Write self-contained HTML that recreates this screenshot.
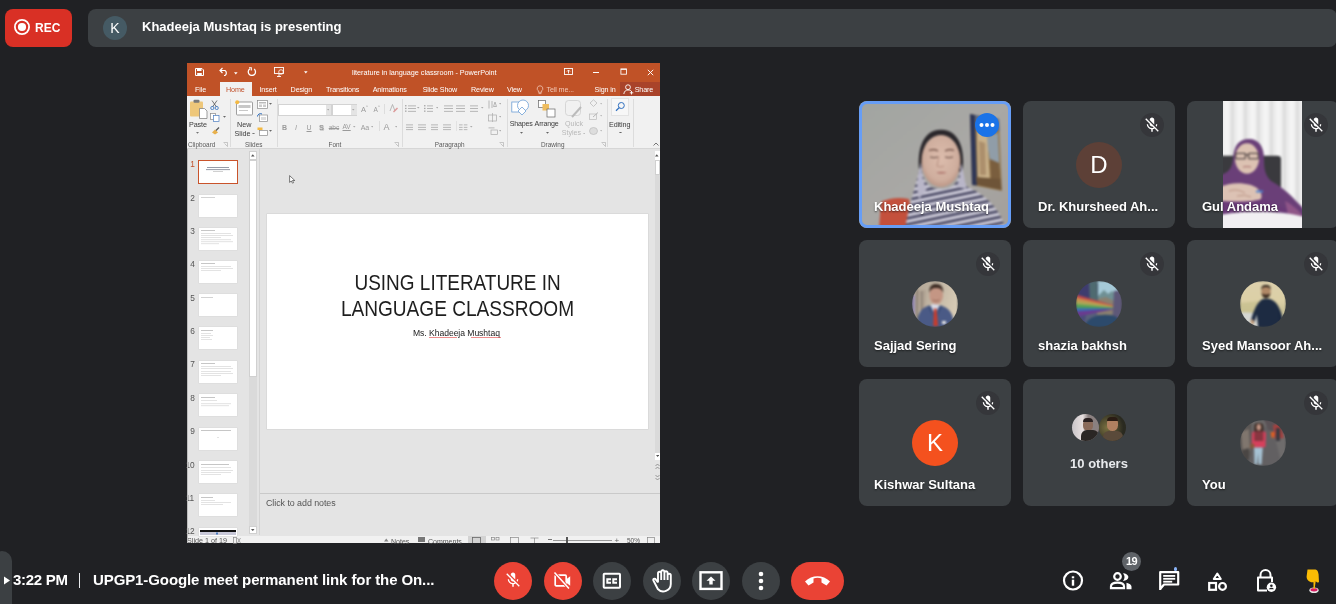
<!DOCTYPE html>
<html><head><meta charset="utf-8">
<style>
*{margin:0;padding:0;box-sizing:border-box}
html,body{width:1336px;height:604px;overflow:hidden;background:#202124;font-family:"Liberation Sans",sans-serif;position:relative}
#root{position:absolute;left:0;top:0;width:1336px;height:604px;will-change:transform}
.abs{position:absolute}
#rec{left:5px;top:9px;width:67px;height:38px;background:#d93025;border-radius:8px}
#bar{left:88px;top:9px;width:1249px;height:38px;background:#3c4043;border-radius:8px}
#ppt{left:187px;top:63px;width:473px;height:480px;background:#e6e6e6;overflow:hidden}
.tile{position:absolute;width:152px;height:127px;background:#3c4043;border-radius:8px;overflow:hidden}
.name{position:absolute;left:15px;top:98px;color:#fff;font-size:13px;font-weight:bold;white-space:nowrap;text-shadow:0 1px 2px rgba(0,0,0,.6)}
.mute{position:absolute;right:11px;top:12px;width:24px;height:24px;border-radius:50%;background:#35363a}
.av{position:absolute;left:53px;top:40.5px;width:46px;height:46px;border-radius:50%;overflow:hidden}
.btn{position:absolute;top:562px;width:38px;height:38px;border-radius:50%;background:#3c4043}
.red{background:#ea4335}
.t{white-space:nowrap}
</style></head><body>
<div id="root">
<div id="rec" class="abs">
  <svg class="abs" style="left:9px;top:10px" width="16" height="16" viewBox="0 0 16 16"><circle cx="8" cy="8" r="7.1" fill="none" stroke="#fff" stroke-width="1.8"/><circle cx="8" cy="8" r="4.1" fill="#fff"/></svg>
  <div class="abs" style="left:30px;top:12px;color:#fff;font-size:12px;font-weight:bold;line-height:14px">REC</div>
</div>
<div id="bar" class="abs">
  <div class="abs" style="left:15px;top:7px;width:24px;height:24px;border-radius:50%;background:#455a64;color:#fff;font-size:14px;line-height:24px;text-align:center">K</div>
  <div class="abs" style="left:54px;top:10px;color:#fff;font-size:13px;font-weight:bold;line-height:15px;white-space:nowrap">Khadeeja Mushtaq is presenting</div>
</div>
<!--PPT-->
<div class="abs" style="left:187px;top:63px;width:473px;height:480px;background:#e4e4e4"></div>
<div class="abs" style="left:187px;top:63px;width:473px;height:33px;background:#c05227"></div>
<div class="abs" style="left:620px;top:82px;width:40px;height:14px;background:#a9432a"></div>
<div class="abs" style="left:220px;top:82px;width:32px;height:14px;background:#f1f1f1"></div>
<div class="abs" style="left:187px;top:96px;width:473px;height:53px;background:#f1f1f1"></div>
<div class="abs" style="left:187px;top:148px;width:473px;height:1px;background:#d6d6d6"></div>
<svg class="abs" style="left:195px;top:68px" width="9" height="8" viewBox="0 0 9 8"><path d="M0.5 0.5H7L8.5 2V7.5H0.5Z" fill="none" stroke="#fff" stroke-width="1"/><rect x="2" y="0.5" width="4.5" height="2.5" fill="#fff"/><rect x="2.2" y="5" width="4.6" height="2.5" fill="#fff"/></svg>
<svg class="abs" style="left:219px;top:67px" width="10" height="9" viewBox="0 0 10 9"><path d="M1.5 3.5H6a3 3 0 0 1 0 5H5" fill="none" stroke="#fff" stroke-width="1.2"/><path d="M3.5 1L1 3.5L3.5 6" fill="none" stroke="#fff" stroke-width="1.2"/></svg>
<svg class="abs" style="left:233.5px;top:72px" width="4" height="3" viewBox="0 0 4 3"><path d="M0 0.3H3.6L1.8 2.5Z" fill="#fff"/></svg>
<svg class="abs" style="left:247px;top:67px" width="10" height="9" viewBox="0 0 10 9"><path d="M3 1.8a3.6 3.6 0 1 0 4.2 0.3" fill="none" stroke="#fff" stroke-width="1.3"/><path d="M2 0.8H4.3V3.5" fill="none" stroke="#fff" stroke-width="1.1"/></svg>
<svg class="abs" style="left:274px;top:67px" width="11" height="10" viewBox="0 0 11 10"><rect x="0.5" y="0.5" width="9" height="6" fill="none" stroke="#fff" stroke-width="0.9"/><path d="M5 7V9.5M3 9.5H7" stroke="#fff" stroke-width="0.9"/><circle cx="7" cy="5" r="2.3" fill="none" stroke="#fff" stroke-width="0.8"/></svg>
<svg class="abs" style="left:303.5px;top:71px" width="4" height="3" viewBox="0 0 4 3"><path d="M0 0.3H3.6L1.8 2.5Z" fill="#fff"/></svg>
<div class="abs t" style="left:352px;top:69.02px;font-size:7.3px;line-height:7.3px;color:#fff;font-weight:400;letter-spacing:-0.06px">literature in language classroom - PowerPoint</div>
<svg class="abs" style="left:564px;top:68px" width="9" height="7" viewBox="0 0 9 7"><rect x="0.5" y="0.5" width="8" height="6" fill="none" stroke="#fff" stroke-width="0.9"/><path d="M4.5 5.5V2M3 3.5L4.5 2L6 3.5" fill="none" stroke="#fff" stroke-width="0.9"/></svg>
<div class="abs" style="left:593px;top:72px;width:6px;height:0.9px;background:#fff"></div>
<svg class="abs" style="left:619.5px;top:68.3px" width="8" height="8" viewBox="0 0 8 8"><rect x="0.9" y="0.9" width="5.6" height="5.3" fill="none" stroke="#fff" stroke-width="0.85"/><rect x="0.9" y="0.9" width="5.6" height="0.9" fill="#fff"/></svg>
<svg class="abs" style="left:647px;top:69px" width="7" height="7" viewBox="0 0 7 7"><path d="M0.8 0.8L6.2 6.2M6.2 0.8L0.8 6.2" stroke="#fff" stroke-width="0.95"/></svg>
<div class="abs t" style="left:195px;top:85.51px;font-size:7.2px;line-height:7.2px;color:#fff;font-weight:400;letter-spacing:-0.15px">File</div>
<div class="abs t" style="left:226px;top:85.51px;font-size:7.2px;line-height:7.2px;color:#c1502b;font-weight:400;letter-spacing:-0.15px">Home</div>
<div class="abs t" style="left:259.5px;top:85.51px;font-size:7.2px;line-height:7.2px;color:#fff;font-weight:400;letter-spacing:-0.15px">Insert</div>
<div class="abs t" style="left:290.6px;top:85.51px;font-size:7.2px;line-height:7.2px;color:#fff;font-weight:400;letter-spacing:-0.15px">Design</div>
<div class="abs t" style="left:326px;top:85.51px;font-size:7.2px;line-height:7.2px;color:#fff;font-weight:400;letter-spacing:-0.15px">Transitions</div>
<div class="abs t" style="left:372.7px;top:85.51px;font-size:7.2px;line-height:7.2px;color:#fff;font-weight:400;letter-spacing:-0.15px">Animations</div>
<div class="abs t" style="left:422.7px;top:85.51px;font-size:7.2px;line-height:7.2px;color:#fff;font-weight:400;letter-spacing:-0.15px">Slide Show</div>
<div class="abs t" style="left:471px;top:85.51px;font-size:7.2px;line-height:7.2px;color:#fff;font-weight:400;letter-spacing:-0.15px">Review</div>
<div class="abs t" style="left:507px;top:85.51px;font-size:7.2px;line-height:7.2px;color:#fff;font-weight:400;letter-spacing:-0.15px">View</div>
<div class="abs t" style="left:546.6px;top:85.51px;font-size:7.2px;line-height:7.2px;color:#f2c9b8;font-weight:400;letter-spacing:-0.15px">Tell me...</div>
<div class="abs t" style="left:594.6px;top:85.51px;font-size:7.2px;line-height:7.2px;color:#fff;font-weight:400;letter-spacing:-0.15px">Sign in</div>
<div class="abs t" style="left:634.7px;top:85.51px;font-size:7.2px;line-height:7.2px;color:#fff;font-weight:400;letter-spacing:-0.15px">Share</div>
<svg class="abs" style="left:536px;top:85px" width="8" height="10" viewBox="0 0 8 10"><path d="M4 0.8a2.8 2.8 0 0 1 1.6 5.1V7.3H2.4V5.9A2.8 2.8 0 0 1 4 0.8ZM2.6 8.6H5.4" fill="none" stroke="#f2c9b8" stroke-width="0.8"/></svg>
<svg class="abs" style="left:623px;top:84px" width="11" height="11" viewBox="0 0 11 11"><circle cx="5" cy="3.2" r="2.4" fill="none" stroke="#fff" stroke-width="0.9"/><path d="M0.8 10C1.3 7 3 6 5 6S8 6.5 8.5 7.5M8.5 7V10.5M6.8 8.8H10.3" fill="none" stroke="#fff" stroke-width="0.9"/></svg>
<div class="abs t" style="left:188px;top:141.58px;font-size:6.4px;line-height:6.4px;color:#5a5a5a;font-weight:400;">Clipboard</div>
<div class="abs t" style="left:245px;top:141.58px;font-size:6.4px;line-height:6.4px;color:#5a5a5a;font-weight:400;">Slides</div>
<div class="abs t" style="left:328.5px;top:141.58px;font-size:6.4px;line-height:6.4px;color:#5a5a5a;font-weight:400;">Font</div>
<div class="abs t" style="left:434.8px;top:141.58px;font-size:6.4px;line-height:6.4px;color:#5a5a5a;font-weight:400;">Paragraph</div>
<div class="abs t" style="left:541px;top:141.58px;font-size:6.4px;line-height:6.4px;color:#5a5a5a;font-weight:400;">Drawing</div>
<svg class="abs" style="left:223px;top:142px" width="5" height="5" viewBox="0 0 5 5"><path d="M0.5 0.5H4.5V4.5M1.5 1.5L4.5 4.5" fill="none" stroke="#aaa" stroke-width="0.6"/></svg>
<svg class="abs" style="left:394.4px;top:142px" width="5" height="5" viewBox="0 0 5 5"><path d="M0.5 0.5H4.5V4.5M1.5 1.5L4.5 4.5" fill="none" stroke="#aaa" stroke-width="0.6"/></svg>
<svg class="abs" style="left:498.5px;top:142px" width="5" height="5" viewBox="0 0 5 5"><path d="M0.5 0.5H4.5V4.5M1.5 1.5L4.5 4.5" fill="none" stroke="#aaa" stroke-width="0.6"/></svg>
<svg class="abs" style="left:600.8px;top:142px" width="5" height="5" viewBox="0 0 5 5"><path d="M0.5 0.5H4.5V4.5M1.5 1.5L4.5 4.5" fill="none" stroke="#aaa" stroke-width="0.6"/></svg>
<div class="abs" style="left:230px;top:99px;width:1px;height:48px;background:#dcdcdc"></div>
<div class="abs" style="left:276.6px;top:99px;width:1px;height:48px;background:#dcdcdc"></div>
<div class="abs" style="left:401.5px;top:99px;width:1px;height:48px;background:#dcdcdc"></div>
<div class="abs" style="left:506.7px;top:99px;width:1px;height:48px;background:#dcdcdc"></div>
<div class="abs" style="left:607.3px;top:99px;width:1px;height:48px;background:#dcdcdc"></div>
<div class="abs" style="left:633.4px;top:99px;width:1px;height:48px;background:#dcdcdc"></div>
<svg class="abs" style="left:189px;top:99px" width="19" height="20" viewBox="0 0 19 20"><rect x="1" y="2.5" width="13" height="15" rx="1" fill="#eec77a"/><rect x="4.5" y="0.8" width="6" height="3" rx="1" fill="#7a7a7a"/><path d="M10.5 9.5H15.5L18 12V19.5H10.5Z" fill="#fff" stroke="#777" stroke-width="0.7"/></svg>
<div class="abs t" style="left:189px;top:121.41px;font-size:7.2px;line-height:7.2px;color:#3b3b3b;font-weight:400;letter-spacing:-0.1px">Paste</div>
<svg class="abs" style="left:195.5px;top:132.0px" width="3" height="1.7999999999999998" viewBox="0 0 3 1.7999999999999998"><path d="M0 0H3L1.5 1.7999999999999998Z" fill="#777"/></svg>
<svg class="abs" style="left:210px;top:100px" width="9" height="10" viewBox="0 0 9 10"><path d="M2 0.5L6.5 7M7 0.5L2.5 7" stroke="#555" stroke-width="0.8"/><circle cx="2.3" cy="8" r="1.6" fill="none" stroke="#2f6fbf" stroke-width="0.8"/><circle cx="6.7" cy="8" r="1.6" fill="none" stroke="#2f6fbf" stroke-width="0.8"/></svg>
<svg class="abs" style="left:210px;top:113px" width="10" height="9" viewBox="0 0 10 9"><rect x="0.5" y="0.5" width="5" height="6" fill="#fff" stroke="#888" stroke-width="0.7"/><rect x="3.5" y="2.5" width="5.5" height="6" fill="#fff" stroke="#4a7cc0" stroke-width="0.7"/></svg>
<svg class="abs" style="left:222.5px;top:116.0px" width="3" height="1.7999999999999998" viewBox="0 0 3 1.7999999999999998"><path d="M0 0H3L1.5 1.7999999999999998Z" fill="#666"/></svg>
<svg class="abs" style="left:211px;top:127px" width="9" height="8" viewBox="0 0 9 8"><path d="M1 5.5L4 2.5L7 5.5L4 7.5Z" fill="#e8b04a"/><path d="M5 3.5L8 0.5" stroke="#555" stroke-width="1.2"/></svg>
<svg class="abs" style="left:234px;top:99px" width="20" height="17" viewBox="0 0 20 17"><rect x="2.5" y="3" width="16" height="13" rx="0.8" fill="#fff" stroke="#888" stroke-width="0.8"/><rect x="4.5" y="6" width="12" height="3" fill="#c8c8c8"/><rect x="5" y="11" width="9" height="0.8" fill="#bbb"/><circle cx="3.2" cy="3.2" r="2" fill="#f4b942"/></svg>
<div class="abs t" style="left:237px;top:121.41px;font-size:7.2px;line-height:7.2px;color:#3b3b3b;font-weight:400;">New</div>
<div class="abs t" style="left:234.5px;top:130.11px;font-size:7.2px;line-height:7.2px;color:#3b3b3b;font-weight:400;">Slide</div>
<svg class="abs" style="left:251.5px;top:132.5px" width="3" height="1.7999999999999998" viewBox="0 0 3 1.7999999999999998"><path d="M0 0H3L1.5 1.7999999999999998Z" fill="#777"/></svg>
<svg class="abs" style="left:257px;top:100px" width="11" height="9" viewBox="0 0 11 9"><rect x="0.5" y="0.5" width="10" height="8" fill="#fff" stroke="#8a8a8a" stroke-width="0.7"/><rect x="2" y="2" width="7" height="1.5" fill="#bbb"/><rect x="2" y="4.5" width="3" height="2.5" fill="#ccc"/><rect x="6" y="4.5" width="3" height="2.5" fill="#ccc"/></svg>
<svg class="abs" style="left:268.5px;top:103.0px" width="3" height="1.7999999999999998" viewBox="0 0 3 1.7999999999999998"><path d="M0 0H3L1.5 1.7999999999999998Z" fill="#666"/></svg>
<svg class="abs" style="left:257px;top:113px" width="11" height="9" viewBox="0 0 11 9"><rect x="2.5" y="2" width="8" height="6.5" fill="#fff" stroke="#8a8a8a" stroke-width="0.7"/><path d="M0.5 3.5A3 3 0 0 1 5 1" fill="none" stroke="#2f6fbf" stroke-width="1"/><rect x="4" y="4" width="5" height="3" fill="#ddd"/></svg>
<svg class="abs" style="left:257px;top:127px" width="11" height="9" viewBox="0 0 11 9"><rect x="0.5" y="0.5" width="5" height="2.5" fill="#f4b942"/><rect x="2.5" y="3.5" width="8" height="5" fill="#fff" stroke="#8a8a8a" stroke-width="0.7"/></svg>
<svg class="abs" style="left:268.5px;top:130.0px" width="3" height="1.7999999999999998" viewBox="0 0 3 1.7999999999999998"><path d="M0 0H3L1.5 1.7999999999999998Z" fill="#666"/></svg>
<div class="abs" style="left:278.4px;top:103.6px;width:53.3px;height:12px;background:#fff;border:1px solid #d3d3d3"></div>
<div class="abs" style="left:325.5px;top:104.6px;width:5.5px;height:10px;background:#e4e4e4"></div>
<svg class="abs" style="left:326.95px;top:109.16666666666667px" width="2.5" height="1.5" viewBox="0 0 2.5 1.5"><path d="M0 0H2.5L1.25 1.5Z" fill="#aaa"/></svg>
<div class="abs" style="left:331.7px;top:103.6px;width:25.6px;height:12px;background:#fff;border:1px solid #d3d3d3"></div>
<div class="abs" style="left:351px;top:104.6px;width:5.5px;height:10px;background:#e4e4e4"></div>
<svg class="abs" style="left:352.45px;top:109.16666666666667px" width="2.5" height="1.5" viewBox="0 0 2.5 1.5"><path d="M0 0H2.5L1.25 1.5Z" fill="#aaa"/></svg>
<div class="abs t" style="left:361px;top:106.15px;font-size:7.5px;line-height:7.5px;color:#9a9a9a;font-weight:400;">A</div>
<div class="abs t" style="left:366px;top:104.61px;font-size:4px;line-height:4px;color:#9a9a9a;font-weight:400;">^</div>
<div class="abs t" style="left:373.5px;top:107.00px;font-size:6.5px;line-height:6.5px;color:#9a9a9a;font-weight:400;">A</div>
<div class="abs t" style="left:378px;top:104.61px;font-size:4px;line-height:4px;color:#9a9a9a;font-weight:400;">^</div>
<div class="abs" style="left:384.3px;top:104px;width:1px;height:10px;background:#ddd"></div>
<svg class="abs" style="left:389px;top:104px" width="9" height="9" viewBox="0 0 9 9"><path d="M1 7L3.5 0.5L6 7" fill="none" stroke="#aaa" stroke-width="0.8"/><path d="M4.5 8L8.5 4" stroke="#d99" stroke-width="1.5"/></svg>
<div class="abs t" style="left:282px;top:124.07px;font-size:7px;line-height:7px;color:#9a9a9a;font-weight:700;">B</div>
<div class="abs t" style="left:295px;top:124.07px;font-size:7px;line-height:7px;color:#9a9a9a;font-weight:400;"><i>I</i></div>
<div class="abs t" style="left:306.5px;top:124.07px;font-size:7px;line-height:7px;color:#9a9a9a;font-weight:400;"><u>U</u></div>
<div class="abs t" style="left:319px;top:123.65px;font-size:7.5px;line-height:7.5px;color:#9a9a9a;font-weight:700;text-shadow:0.5px 0.5px 0 #ccc">S</div>
<div class="abs t" style="left:328.7px;top:124.50px;font-size:6.5px;line-height:6.5px;color:#9a9a9a;font-weight:400;"><s>abc</s></div>
<div class="abs t" style="left:342.5px;top:123.50px;font-size:6.5px;line-height:6.5px;color:#9a9a9a;font-weight:400;"><u>AV</u></div>
<svg class="abs" style="left:353.35px;top:126.16666666666667px" width="2.5" height="1.5" viewBox="0 0 2.5 1.5"><path d="M0 0H2.5L1.25 1.5Z" fill="#aaa"/></svg>
<div class="abs t" style="left:360.7px;top:124.07px;font-size:7px;line-height:7px;color:#9a9a9a;font-weight:400;">Aa</div>
<svg class="abs" style="left:370.75px;top:126.16666666666667px" width="2.5" height="1.5" viewBox="0 0 2.5 1.5"><path d="M0 0H2.5L1.25 1.5Z" fill="#aaa"/></svg>
<div class="abs" style="left:379px;top:121px;width:1px;height:10px;background:#ddd"></div>
<div class="abs t" style="left:383.6px;top:122.68px;font-size:9px;line-height:9px;color:#9a9a9a;font-weight:400;">A</div>
<svg class="abs" style="left:394.55px;top:126.16666666666667px" width="2.5" height="1.5" viewBox="0 0 2.5 1.5"><path d="M0 0H2.5L1.25 1.5Z" fill="#aaa"/></svg>
<svg class="abs" style="left:405px;top:105px" width="11" height="9.100000000000001" viewBox="0 0 11 9.100000000000001"><rect x="0" y="0.09999999999999998" width="1.5" height="1.3" fill="#a8a8a8"/><rect x="3" y="0.5" width="8" height="0.8" fill="#a8a8a8"/><rect x="0" y="2.8000000000000003" width="1.5" height="1.3" fill="#a8a8a8"/><rect x="3" y="3.2" width="8" height="0.8" fill="#a8a8a8"/><rect x="0" y="5.5" width="1.5" height="1.3" fill="#a8a8a8"/><rect x="3" y="5.9" width="8" height="0.8" fill="#a8a8a8"/></svg>
<svg class="abs" style="left:417.15px;top:107.16666666666667px" width="2.5" height="1.5" viewBox="0 0 2.5 1.5"><path d="M0 0H2.5L1.25 1.5Z" fill="#aaa"/></svg>
<svg class="abs" style="left:424px;top:105px" width="9" height="9.100000000000001" viewBox="0 0 9 9.100000000000001"><rect x="0" y="0.09999999999999998" width="1.5" height="1.3" fill="#a8a8a8"/><rect x="3" y="0.5" width="6" height="0.8" fill="#a8a8a8"/><rect x="0" y="2.8000000000000003" width="1.5" height="1.3" fill="#a8a8a8"/><rect x="3" y="3.2" width="6" height="0.8" fill="#a8a8a8"/><rect x="0" y="5.5" width="1.5" height="1.3" fill="#a8a8a8"/><rect x="3" y="5.9" width="6" height="0.8" fill="#a8a8a8"/></svg>
<svg class="abs" style="left:435.75px;top:107.16666666666667px" width="2.5" height="1.5" viewBox="0 0 2.5 1.5"><path d="M0 0H2.5L1.25 1.5Z" fill="#aaa"/></svg>
<svg class="abs" style="left:443.6px;top:105px" width="9" height="9.100000000000001" viewBox="0 0 9 9.100000000000001"><rect x="0" y="0.5" width="9" height="0.8" fill="#a8a8a8"/><rect x="0" y="3.2" width="9" height="0.8" fill="#a8a8a8"/><rect x="0" y="5.9" width="9" height="0.8" fill="#a8a8a8"/></svg>
<svg class="abs" style="left:456.4px;top:105px" width="9" height="9.100000000000001" viewBox="0 0 9 9.100000000000001"><rect x="0" y="0.5" width="9" height="0.8" fill="#a8a8a8"/><rect x="0" y="3.2" width="9" height="0.8" fill="#a8a8a8"/><rect x="0" y="5.9" width="9" height="0.8" fill="#a8a8a8"/></svg>
<svg class="abs" style="left:470px;top:105px" width="8" height="9.100000000000001" viewBox="0 0 8 9.100000000000001"><rect x="0" y="0.5" width="8" height="0.8" fill="#a8a8a8"/><rect x="0" y="3.2" width="8" height="0.8" fill="#a8a8a8"/><rect x="0" y="5.9" width="8" height="0.8" fill="#a8a8a8"/></svg>
<svg class="abs" style="left:481.15px;top:107.16666666666667px" width="2.5" height="1.5" viewBox="0 0 2.5 1.5"><path d="M0 0H2.5L1.25 1.5Z" fill="#aaa"/></svg>
<svg class="abs" style="left:488px;top:100px" width="9" height="9" viewBox="0 0 9 9"><path d="M1 0.5V8.5M4 1V8M7 2L5.5 6.5H8.5Z" fill="none" stroke="#aaa" stroke-width="0.8"/></svg>
<svg class="abs" style="left:498.75px;top:103.16666666666667px" width="2.5" height="1.5" viewBox="0 0 2.5 1.5"><path d="M0 0H2.5L1.25 1.5Z" fill="#aaa"/></svg>
<svg class="abs" style="left:488px;top:113px" width="9" height="9" viewBox="0 0 9 9"><rect x="0.5" y="2" width="8" height="6" fill="none" stroke="#aaa" stroke-width="0.7"/><path d="M4.5 0V9" stroke="#aaa" stroke-width="0.7"/></svg>
<svg class="abs" style="left:498.75px;top:116.16666666666667px" width="2.5" height="1.5" viewBox="0 0 2.5 1.5"><path d="M0 0H2.5L1.25 1.5Z" fill="#aaa"/></svg>
<svg class="abs" style="left:488px;top:127px" width="10" height="8" viewBox="0 0 10 8"><rect x="3" y="3" width="6.5" height="4.5" fill="none" stroke="#aaa" stroke-width="0.7"/><rect x="0.5" y="0.5" width="6" height="0.8" fill="#aaa"/></svg>
<svg class="abs" style="left:498.75px;top:130.16666666666666px" width="2.5" height="1.5" viewBox="0 0 2.5 1.5"><path d="M0 0H2.5L1.25 1.5Z" fill="#aaa"/></svg>
<svg class="abs" style="left:405.8px;top:123.6px" width="7.5" height="8.2" viewBox="0 0 7.5 8.2"><rect x="0" y="0.5" width="7.5" height="0.8" fill="#a8a8a8"/><rect x="0" y="2.9" width="7.5" height="0.8" fill="#a8a8a8"/><rect x="0" y="5.3" width="7.5" height="0.8" fill="#a8a8a8"/></svg>
<svg class="abs" style="left:418px;top:123.6px" width="8" height="8.2" viewBox="0 0 8 8.2"><rect x="0" y="0.5" width="8" height="0.8" fill="#a8a8a8"/><rect x="0" y="2.9" width="8" height="0.8" fill="#a8a8a8"/><rect x="0" y="5.3" width="8" height="0.8" fill="#a8a8a8"/></svg>
<svg class="abs" style="left:430.8px;top:123.6px" width="7.5" height="8.2" viewBox="0 0 7.5 8.2"><rect x="0" y="0.5" width="7.5" height="0.8" fill="#a8a8a8"/><rect x="0" y="2.9" width="7.5" height="0.8" fill="#a8a8a8"/><rect x="0" y="5.3" width="7.5" height="0.8" fill="#a8a8a8"/></svg>
<svg class="abs" style="left:443px;top:123.6px" width="8" height="8.2" viewBox="0 0 8 8.2"><rect x="0" y="0.5" width="8" height="0.8" fill="#a8a8a8"/><rect x="0" y="2.9" width="8" height="0.8" fill="#a8a8a8"/><rect x="0" y="5.3" width="8" height="0.8" fill="#a8a8a8"/></svg>
<div class="abs" style="left:456px;top:121px;width:1px;height:10px;background:#e2e2e2"></div>
<svg class="abs" style="left:459px;top:123.6px" width="8.5" height="7" viewBox="0 0 8.5 7"><rect x="0" y="0.5" width="3.6" height="0.8" fill="#aaa"/><rect x="4.8" y="0.5" width="3.6" height="0.8" fill="#aaa"/><rect x="0" y="2.9" width="3.6" height="0.8" fill="#aaa"/><rect x="4.8" y="2.9" width="3.6" height="0.8" fill="#aaa"/><rect x="0" y="5.3" width="3.6" height="0.8" fill="#aaa"/><rect x="4.8" y="5.3" width="3.6" height="0.8" fill="#aaa"/></svg>
<svg class="abs" style="left:470.35px;top:126.16666666666667px" width="2.5" height="1.5" viewBox="0 0 2.5 1.5"><path d="M0 0H2.5L1.25 1.5Z" fill="#aaa"/></svg>
<svg class="abs" style="left:511px;top:99px" width="19" height="19" viewBox="0 0 19 19"><rect x="0.8" y="3" width="10" height="10" fill="#fff" stroke="#6d9fd6" stroke-width="0.8"/><circle cx="12" cy="6.5" r="5.5" fill="#fff" stroke="#6d9fd6" stroke-width="0.8"/><path d="M7 12L11 8L15 12L11 16Z" fill="#fff" stroke="#6d9fd6" stroke-width="0.8"/></svg>
<div class="abs t" style="left:509.7px;top:121.49px;font-size:7.1px;line-height:7.1px;color:#3b3b3b;font-weight:400;letter-spacing:-0.2px">Shapes</div>
<svg class="abs" style="left:519.5px;top:132.0px" width="3" height="1.7999999999999998" viewBox="0 0 3 1.7999999999999998"><path d="M0 0H3L1.5 1.7999999999999998Z" fill="#666"/></svg>
<svg class="abs" style="left:538px;top:100px" width="18" height="18" viewBox="0 0 18 18"><rect x="0.5" y="0.5" width="7" height="7" fill="#fff" stroke="#666" stroke-width="0.7"/><rect x="4.5" y="4" width="6.5" height="6.5" fill="#efbd5f"/><rect x="9" y="9" width="8" height="8" fill="#fff" stroke="#666" stroke-width="0.7"/></svg>
<div class="abs t" style="left:534.6px;top:121.49px;font-size:7.1px;line-height:7.1px;color:#3b3b3b;font-weight:400;letter-spacing:-0.2px">Arrange</div>
<svg class="abs" style="left:545.8px;top:132.0px" width="3" height="1.7999999999999998" viewBox="0 0 3 1.7999999999999998"><path d="M0 0H3L1.5 1.7999999999999998Z" fill="#666"/></svg>
<svg class="abs" style="left:565px;top:100px" width="19" height="19" viewBox="0 0 19 19"><rect x="0.5" y="0.5" width="15" height="15" rx="3" fill="none" stroke="#cfcfcf" stroke-width="0.8"/><path d="M7 17L16 7" stroke="#bbb" stroke-width="2"/></svg>
<div class="abs t" style="left:565px;top:121.49px;font-size:7.1px;line-height:7.1px;color:#b8b8b8;font-weight:400;">Quick</div>
<div class="abs t" style="left:561.8px;top:130.29px;font-size:7.1px;line-height:7.1px;color:#b8b8b8;font-weight:400;">Styles</div>
<svg class="abs" style="left:582.75px;top:132.66666666666666px" width="2.5" height="1.5" viewBox="0 0 2.5 1.5"><path d="M0 0H2.5L1.25 1.5Z" fill="#bbb"/></svg>
<svg class="abs" style="left:588.5px;top:99px" width="9" height="8" viewBox="0 0 9 8"><path d="M1 4L4.5 0.8L8 4L4.5 7.5Z" fill="none" stroke="#bbb" stroke-width="0.8"/></svg>
<svg class="abs" style="left:599.75px;top:103.16666666666667px" width="2.5" height="1.5" viewBox="0 0 2.5 1.5"><path d="M0 0H2.5L1.25 1.5Z" fill="#bbb"/></svg>
<svg class="abs" style="left:588.5px;top:112px" width="10" height="8" viewBox="0 0 10 8"><rect x="0.5" y="2" width="7" height="5.5" fill="none" stroke="#bbb" stroke-width="0.7"/><path d="M4 5L9 0.5" stroke="#aaa" stroke-width="0.8"/></svg>
<svg class="abs" style="left:599.75px;top:115.16666666666667px" width="2.5" height="1.5" viewBox="0 0 2.5 1.5"><path d="M0 0H2.5L1.25 1.5Z" fill="#bbb"/></svg>
<svg class="abs" style="left:588.5px;top:126px" width="10" height="9" viewBox="0 0 10 9"><ellipse cx="4.5" cy="5" rx="4" ry="3.5" fill="#ddd" stroke="#bbb" stroke-width="0.7"/></svg>
<svg class="abs" style="left:599.75px;top:130.16666666666666px" width="2.5" height="1.5" viewBox="0 0 2.5 1.5"><path d="M0 0H2.5L1.25 1.5Z" fill="#bbb"/></svg>
<div class="abs" style="left:611px;top:98px;width:18px;height:18.4px;background:#f7f7f7;border:1px solid #e3e3e3"></div>
<svg class="abs" style="left:613px;top:100px" width="14" height="14" viewBox="0 0 14 14"><circle cx="8.3" cy="5.5" r="3" fill="none" stroke="#2f6fbf" stroke-width="1"/><path d="M6.2 7.6L3 10.8" stroke="#2f6fbf" stroke-width="1.3"/></svg>
<div class="abs t" style="left:609px;top:120.61px;font-size:7.2px;line-height:7.2px;color:#3b3b3b;font-weight:400;letter-spacing:-0.1px">Editing</div>
<svg class="abs" style="left:618.8px;top:131.6px" width="3" height="1.7999999999999998" viewBox="0 0 3 1.7999999999999998"><path d="M0 0H3L1.5 1.7999999999999998Z" fill="#666"/></svg>
<svg class="abs" style="left:653px;top:142px" width="6" height="4" viewBox="0 0 6 4"><path d="M0.5 3.5L3 1L5.5 3.5" fill="none" stroke="#555" stroke-width="0.8"/></svg>
<div class="abs" style="left:248.8px;top:151px;width:8.5px;height:383px;background:#dadada"></div>
<div class="abs" style="left:248.8px;top:151px;width:8.5px;height:9px;background:#fff;border:1px solid #d0d0d0"></div>
<svg class="abs" style="left:251.2px;top:154px" width="4" height="3" viewBox="0 0 4 3"><path d="M0 2.5H3.6L1.8 0.3Z" fill="#555"/></svg>
<div class="abs" style="left:248.8px;top:160px;width:8.5px;height:216.5px;background:#fff;border:1px solid #d0d0d0"></div>
<div class="abs" style="left:248.8px;top:525.8px;width:8.5px;height:8px;background:#fff;border:1px solid #d0d0d0"></div>
<svg class="abs" style="left:251.25px;top:528.8333333333334px" width="3.5" height="2.1" viewBox="0 0 3.5 2.1"><path d="M0 0H3.5L1.75 2.1Z" fill="#555"/></svg>
<div class="abs" style="left:259.4px;top:149px;width:1px;height:386px;background:#d4d4d4"></div>
<div class="abs t" style="left:190.3px;top:159.57px;font-size:8.3px;line-height:8.3px;color:#c1502b;font-weight:400;">1</div>
<div class="abs" style="left:198px;top:160px;width:40px;height:24px;background:#fff;border:1.6px solid #c9532b"></div>
<svg class="abs" style="left:203px;top:166px" width="30" height="10" viewBox="0 0 30 10"><rect x="4" y="1" width="22" height="0.9" fill="#8a90a0"/><rect x="3" y="3.2" width="24" height="0.9" fill="#8a90a0"/><rect x="10" y="5.3" width="10" height="0.6" fill="#b0b0b0"/></svg>
<div class="abs t" style="left:190.3px;top:194.07px;font-size:8.3px;line-height:8.3px;color:#555;font-weight:400;">2</div>
<div class="abs" style="left:199px;top:194.5px;width:37.5px;height:22px;background:#fff;box-shadow:0 0 0 0.5px #d8d8d8"></div>
<div class="abs t" style="left:190.3px;top:227.27px;font-size:8.3px;line-height:8.3px;color:#555;font-weight:400;">3</div>
<div class="abs" style="left:199px;top:227.7px;width:37.5px;height:22px;background:#fff;box-shadow:0 0 0 0.5px #d8d8d8"></div>
<div class="abs t" style="left:190.3px;top:260.07px;font-size:8.3px;line-height:8.3px;color:#555;font-weight:400;">4</div>
<div class="abs" style="left:199px;top:260.5px;width:37.5px;height:22px;background:#fff;box-shadow:0 0 0 0.5px #d8d8d8"></div>
<div class="abs t" style="left:190.3px;top:293.57px;font-size:8.3px;line-height:8.3px;color:#555;font-weight:400;">5</div>
<div class="abs" style="left:199px;top:294px;width:37.5px;height:22px;background:#fff;box-shadow:0 0 0 0.5px #d8d8d8"></div>
<div class="abs t" style="left:190.3px;top:326.87px;font-size:8.3px;line-height:8.3px;color:#555;font-weight:400;">6</div>
<div class="abs" style="left:199px;top:327.3px;width:37.5px;height:22px;background:#fff;box-shadow:0 0 0 0.5px #d8d8d8"></div>
<div class="abs t" style="left:190.3px;top:360.07px;font-size:8.3px;line-height:8.3px;color:#555;font-weight:400;">7</div>
<div class="abs" style="left:199px;top:360.5px;width:37.5px;height:22px;background:#fff;box-shadow:0 0 0 0.5px #d8d8d8"></div>
<div class="abs t" style="left:190.3px;top:393.57px;font-size:8.3px;line-height:8.3px;color:#555;font-weight:400;">8</div>
<div class="abs" style="left:199px;top:394px;width:37.5px;height:22px;background:#fff;box-shadow:0 0 0 0.5px #d8d8d8"></div>
<div class="abs t" style="left:190.3px;top:427.07px;font-size:8.3px;line-height:8.3px;color:#555;font-weight:400;">9</div>
<div class="abs" style="left:199px;top:427.5px;width:37.5px;height:22px;background:#fff;box-shadow:0 0 0 0.5px #d8d8d8"></div>
<div class="abs t" style="left:185.5px;top:460.57px;font-size:8.3px;line-height:8.3px;color:#555;font-weight:400;">10</div>
<div class="abs" style="left:199px;top:461px;width:37.5px;height:22px;background:#fff;box-shadow:0 0 0 0.5px #d8d8d8"></div>
<div class="abs t" style="left:185.5px;top:493.57px;font-size:8.3px;line-height:8.3px;color:#555;font-weight:400;">11</div>
<div class="abs" style="left:199px;top:494px;width:37.5px;height:22px;background:#fff;box-shadow:0 0 0 0.5px #d8d8d8"></div>
<div class="abs t" style="left:185.5px;top:527.07px;font-size:8.3px;line-height:8.3px;color:#555;font-weight:400;">12</div>
<div class="abs" style="left:199px;top:527.5px;width:37.5px;height:8px;background:#fff;box-shadow:0 0 0 0.5px #d8d8d8"></div>
<svg class="abs" style="left:201px;top:197px" width="20" height="2" viewBox="0 0 20 2"><rect width="14" height="0.8" fill="#c8c8c8"/></svg>
<svg class="abs" style="left:201px;top:230px" width="34" height="16" viewBox="0 0 34 16"><rect width="14" height="0.8" fill="#b8b8b8"/><rect y="3" width="30" height="0.6" fill="#d0d0d0"/><rect y="5" width="32" height="0.6" fill="#d0d0d0"/><rect y="7" width="20" height="0.6" fill="#d0d0d0"/><rect y="9.5" width="30" height="0.6" fill="#d0d0d0"/><rect y="11.5" width="32" height="0.6" fill="#d0d0d0"/><rect y="13.5" width="18" height="0.6" fill="#d0d0d0"/></svg>
<svg class="abs" style="left:201px;top:263px" width="34" height="10" viewBox="0 0 34 10"><rect width="14" height="0.8" fill="#b8b8b8"/><rect y="3" width="30" height="0.6" fill="#d0d0d0"/><rect y="5" width="32" height="0.6" fill="#d0d0d0"/><rect y="7" width="20" height="0.6" fill="#d0d0d0"/></svg>
<svg class="abs" style="left:201px;top:297px" width="20" height="2" viewBox="0 0 20 2"><rect width="12" height="0.8" fill="#c8c8c8"/></svg>
<svg class="abs" style="left:201px;top:330px" width="34" height="14" viewBox="0 0 34 14"><rect width="12" height="0.8" fill="#b8b8b8"/><rect y="3" width="10" height="0.6" fill="#d0d0d0"/><rect y="5" width="12" height="0.6" fill="#d0d0d0"/><rect y="7" width="9" height="0.6" fill="#d0d0d0"/><rect y="9" width="11" height="0.6" fill="#d0d0d0"/></svg>
<svg class="abs" style="left:201px;top:363px" width="34" height="16" viewBox="0 0 34 16"><rect width="14" height="0.8" fill="#b8b8b8"/><rect y="3" width="30" height="0.6" fill="#d0d0d0"/><rect y="5" width="32" height="0.6" fill="#d0d0d0"/><rect y="8" width="30" height="0.6" fill="#d0d0d0"/><rect y="10" width="32" height="0.6" fill="#d0d0d0"/><rect y="12" width="20" height="0.6" fill="#d0d0d0"/></svg>
<svg class="abs" style="left:201px;top:397px" width="34" height="12" viewBox="0 0 34 12"><rect width="14" height="0.8" fill="#b8b8b8"/><rect y="3" width="16" height="0.6" fill="#d0d0d0"/><rect y="6.5" width="30" height="0.6" fill="#d0d0d0"/><rect y="8.5" width="28" height="0.6" fill="#d0d0d0"/></svg>
<svg class="abs" style="left:201px;top:430px" width="34" height="10" viewBox="0 0 34 10"><rect width="30" height="0.8" fill="#b8b8b8"/><rect x="16" y="7" width="2" height="0.6" fill="#d0d0d0"/></svg>
<svg class="abs" style="left:201px;top:464px" width="34" height="14" viewBox="0 0 34 14"><rect width="28" height="0.8" fill="#b8b8b8"/><rect y="3" width="30" height="0.6" fill="#d0d0d0"/><rect y="6" width="32" height="0.6" fill="#d0d0d0"/><rect y="8" width="30" height="0.6" fill="#d0d0d0"/><rect y="10" width="20" height="0.6" fill="#d0d0d0"/></svg>
<svg class="abs" style="left:201px;top:497px" width="34" height="12" viewBox="0 0 34 12"><rect width="12" height="0.8" fill="#b8b8b8"/><rect y="3" width="14" height="0.6" fill="#d0d0d0"/><rect y="5" width="30" height="0.6" fill="#d0d0d0"/><rect y="7" width="22" height="0.6" fill="#d0d0d0"/></svg>
<svg class="abs" style="left:200px;top:529.5px" width="36" height="5.5" viewBox="0 0 36 5.5"><rect width="36" height="2" fill="#111"/><rect y="2" width="36" height="3.5" fill="#c8c8d8"/><rect x="16" y="2.5" width="2" height="2" fill="#4a7cc0"/></svg>
<div class="abs" style="left:267px;top:214px;width:381px;height:214.5px;background:#fff;box-shadow:0 0 0 0.6px #d4d4d4"></div>
<div class="abs t" style="left:267px;top:269.5px;width:381px;text-align:center;font-size:22px;line-height:26px;color:#1e1e1e"><span style="display:inline-block;transform:scaleX(0.862)">USING LITERATURE IN</span></div>
<div class="abs t" style="left:267px;top:295.5px;width:381px;text-align:center;font-size:22px;line-height:26px;color:#1e1e1e"><span style="display:inline-block;transform:scaleX(0.867)">LANGUAGE CLASSROOM</span></div>
<div class="abs t" style="left:413px;top:328.52px;font-size:8.6px;line-height:8.6px;color:#222;font-weight:400;letter-spacing:-0.05px">Ms. Khadeeja Mushtaq</div>
<svg class="abs" style="left:429px;top:336.5px" width="73" height="2" viewBox="0 0 73 2"><path d="M0 1L1 0L2 1L3 0L4 1L5 0L6 1L7 0L8 1L9 0L10 1L11 0L12 1L13 0L14 1L15 0L16 1L17 0L18 1L19 0L20 1L21 0L22 1L23 0L24 1L25 0L26 1L27 0L28 1 M42 1L43 0L44 1L45 0L46 1L47 0L48 1L49 0L50 1L51 0L52 1L53 0L54 1L55 0L56 1L57 0L58 1L59 0L60 1L61 0L62 1L63 0L64 1L65 0L66 1L67 0L68 1L69 0L70 1L71 0L72 1" fill="none" stroke="#e04040" stroke-width="0.6"/></svg>
<div class="abs" style="left:654.6px;top:151px;width:5.4px;height:302px;background:#dadada"></div>
<div class="abs" style="left:654.6px;top:151px;width:5.4px;height:8.5px;background:#fff"></div>
<svg class="abs" style="left:655.3px;top:153.5px" width="4" height="3" viewBox="0 0 4 3"><path d="M0 2.5H3.6L1.8 0.3Z" fill="#555"/></svg>
<div class="abs" style="left:654.6px;top:160px;width:5.4px;height:14.6px;background:#fff;border:1px solid #d0d0d0"></div>
<div class="abs" style="left:654.6px;top:453px;width:5.4px;height:7px;background:#fff"></div>
<svg class="abs" style="left:655.6999999999999px;top:455.23333333333335px" width="3.2" height="1.92" viewBox="0 0 3.2 1.92"><path d="M0 0H3.2L1.6 1.92Z" fill="#555"/></svg>
<svg class="abs" style="left:655px;top:463px" width="5" height="7" viewBox="0 0 5 7"><path d="M0.5 3L2.5 1L4.5 3M0.5 6L2.5 4L4.5 6" fill="none" stroke="#777" stroke-width="0.7"/></svg>
<svg class="abs" style="left:655px;top:474px" width="5" height="7" viewBox="0 0 5 7"><path d="M0.5 1L2.5 3L4.5 1M0.5 4L2.5 6L4.5 4" fill="none" stroke="#777" stroke-width="0.7"/></svg>
<svg class="abs" style="left:288.5px;top:174.8px" width="7" height="9" viewBox="0 0 7 9"><path d="M0.6 0.6V7.4L2.2 6L3.6 8.2L4.6 7.6L3.4 5.5H5.8Z" fill="#fff" stroke="#444" stroke-width="0.7" stroke-linejoin="round"/></svg>
<div class="abs" style="left:260px;top:492.5px;width:400px;height:1px;background:#c9c9c9"></div>
<div class="abs t" style="left:266px;top:499.17px;font-size:8.9px;line-height:8.9px;color:#555;font-weight:400;letter-spacing:-0.05px">Click to add notes</div>
<div class="abs" style="left:187px;top:535.5px;width:473px;height:7.5px;background:#f1f1f1"></div>
<div class="abs t" style="left:187px;top:537.41px;font-size:7.2px;line-height:7.2px;color:#555;font-weight:400;">Slide 1 of 19</div>
<svg class="abs" style="left:233px;top:537px" width="8" height="7" viewBox="0 0 8 7"><rect x="0.5" y="0.5" width="3" height="6" fill="none" stroke="#888" stroke-width="0.7"/><path d="M4.5 1L7.5 6M7.5 1L4.5 6" stroke="#888" stroke-width="0.7"/></svg>
<svg class="abs" style="left:384px;top:538px" width="5" height="4" viewBox="0 0 5 4"><path d="M0 3.5H4.5L2.25 0.5Z" fill="#888"/></svg>
<div class="abs t" style="left:391px;top:537.57px;font-size:7px;line-height:7px;color:#555;font-weight:400;">Notes</div>
<div class="abs" style="left:418px;top:537px;width:7px;height:5px;background:#777"></div>
<div class="abs t" style="left:428px;top:537.57px;font-size:7px;line-height:7px;color:#555;font-weight:400;">Comments</div>
<div class="abs" style="left:467.5px;top:535.5px;width:18.5px;height:7.5px;background:#d3d3d3"></div>
<svg class="abs" style="left:472px;top:537px" width="9" height="6" viewBox="0 0 9 6"><rect x="0.5" y="0.5" width="8" height="6" fill="none" stroke="#666" stroke-width="0.8"/></svg>
<svg class="abs" style="left:491px;top:537px" width="9" height="6" viewBox="0 0 9 6"><rect x="0.5" y="0.5" width="3" height="2.5" fill="none" stroke="#888" stroke-width="0.7"/><rect x="5" y="0.5" width="3" height="2.5" fill="none" stroke="#888" stroke-width="0.7"/></svg>
<svg class="abs" style="left:510px;top:537px" width="9" height="6" viewBox="0 0 9 6"><rect x="0.5" y="0.5" width="8" height="6" fill="none" stroke="#888" stroke-width="0.7"/></svg>
<svg class="abs" style="left:530px;top:537px" width="9" height="6" viewBox="0 0 9 6"><path d="M0.5 1H8.5M4.5 1V6" stroke="#888" stroke-width="0.7"/></svg>
<div class="abs" style="left:548px;top:539px;width:4px;height:0.8px;background:#777"></div>
<div class="abs" style="left:553px;top:539.5px;width:59px;height:0.6px;background:#999"></div>
<div class="abs" style="left:566px;top:537px;width:2px;height:6px;background:#555"></div>
<div class="abs t" style="left:614.5px;top:536.73px;font-size:8px;line-height:8px;color:#666;font-weight:400;">+</div>
<div class="abs t" style="left:627px;top:538.00px;font-size:6.5px;line-height:6.5px;color:#555;font-weight:400;">50%</div>
<svg class="abs" style="left:647px;top:537px" width="8" height="6" viewBox="0 0 8 6"><rect x="0.5" y="0.5" width="7" height="6" fill="none" stroke="#888" stroke-width="0.7"/></svg>
<div class="abs" style="left:187px;top:149px;width:1.2px;height:394px;background:#bdbdbd"></div>
<!--/PPT-->

<!--TILES-->
<div class="tile" style="left:859px;top:101px"><svg style="position:absolute;left:-3px;top:-3px;filter:blur(0.8px)" width="158" height="133" viewBox="-3 -3 158 133">
<defs>
<linearGradient id="kw" x1="0" y1="0" x2="1" y2="1"><stop offset="0" stop-color="#a1a5a1"/><stop offset="0.5" stop-color="#a9a8a5"/><stop offset="1" stop-color="#a39f9b"/></linearGradient>
<linearGradient id="kp" x1="0" y1="0" x2="0" y2="1"><stop offset="0" stop-color="#2d3c6c"/><stop offset="0.18" stop-color="#6a7890"/><stop offset="0.35" stop-color="#b89a68"/><stop offset="0.65" stop-color="#a88a5c"/><stop offset="0.85" stop-color="#8a6e4a"/><stop offset="1" stop-color="#cdb890"/></linearGradient>
<pattern id="ks" width="8" height="6" patternUnits="userSpaceOnUse" patternTransform="rotate(-12)"><rect width="8" height="6" fill="#cac8d6"/><rect y="3.6" width="8" height="2.4" fill="#3c3b58"/></pattern>
<filter id="kb" x="-10%" y="-10%" width="120%" height="120%"><feGaussianBlur stdDeviation="0.7"/></filter>
<radialGradient id="kf" cx="0.5" cy="0.45" r="0.6"><stop offset="0" stop-color="#dcbcac"/><stop offset="0.7" stop-color="#cfae9e"/><stop offset="1" stop-color="#b58e7e"/></radialGradient>
</defs>
<rect x="-3" y="-3" width="158" height="133" fill="url(#kw)"/>
<g>
<path d="M111 13L140 18L143 90L113 84Z" fill="#95784e"/>
<path d="M111 13L116 14L118 84.5L113 84Z" fill="#2e3656"/>
<path d="M116 14L140 18L140.5 30L117 28Z" fill="#5a6a88"/>
<path d="M127 36L139 32L140.5 68L131 60Z" fill="#8ea6bf" opacity="0.8"/>
<path d="M118 30L128 34L131 80L119 80Z" fill="#c9b18a"/>
<path d="M120 40L126 42L127 74L121 74Z" fill="#a08060" opacity="0.7"/>
<path d="M131 58L140 62L141.5 80L132 78Z" fill="#7a5e3e"/>
<path d="M117 76L141.5 78L142.5 89L118 84Z" fill="#6e5438"/>
<path d="M22 101C30 97 40 96 50 98L54 127H20Z" fill="#c4503c"/>
<path d="M61 76C57 52 62 29 82 28.8C102 29 107 52 103 76L100 70C101 50 98 35 82 34.5C66 35 62 50 63 70Z" fill="#2a272b"/>
<ellipse cx="82" cy="60" rx="19.5" ry="26" fill="url(#kf)"/>
<path d="M70 49.5q5 -2 9 0.5M86 50q5 -2.5 9 -0.5" stroke="#6a4a40" stroke-width="1.1" fill="none"/>
<path d="M71 56q4 1.5 8 0M86 56q4 1.5 8 0" stroke="#5a4038" stroke-width="0.9" fill="none"/>
<path d="M80 55L78 65Q81 67 85 65" stroke="#b08878" stroke-width="0.8" fill="none"/>
<path d="M77 71.5Q82 70 88 71.5Q82 74 77 71.5Z" fill="#b07870"/>
<path d="M62 62C57 85 51 100 46 127H146C142 110 128 94 108 86C104 78 103 68 102 62C101 80 96 88 82 88C68 88 63 80 62 62Z" fill="url(#ks)"/>
<path d="M62 62C58 76 57 88 60 98L68 88C64 82 62 72 62 62Z" fill="#b9b6c8"/>
<path d="M102 62C106 76 106 84 108 88L97 86C101 80 102 72 102 62Z" fill="#b9b6c8"/>
</g>
</svg>
<div style="position:absolute;left:116px;top:12px;width:24px;height:24px;border-radius:50%;background:#1a73e8"><svg style="position:absolute;left:4px;top:9px" width="16" height="6" viewBox="0 0 16 6"><circle cx="2.5" cy="3" r="2" fill="#fff"/><circle cx="8" cy="3" r="2" fill="#fff"/><circle cx="13.5" cy="3" r="2" fill="#fff"/></svg></div><div class="name">Khadeeja Mushtaq</div><div style="position:absolute;left:0;top:0;width:152px;height:127px;border:3.5px solid #669df6;border-radius:8px"></div></div>
<div class="tile" style="left:1023px;top:101px"><div class="av" style="background:#5d4037;color:#fff;font-size:24px;line-height:46px;text-align:center">D</div><div class="mute"><svg style="position:absolute;left:3px;top:3px" width="18" height="18" viewBox="0 0 24 24"><path fill="#fff" d="M19 11h-1.7c0 .74-.16 1.43-.43 2.05l1.23 1.23c.56-.98.9-2.09.9-3.28zm-4.02.17c0-.06.02-.11.02-.17V5c0-1.66-1.34-3-3-3S9 3.34 9 5v.18l5.98 5.99zM4.27 3L3 4.27l6.01 6.01V11c0 1.66 1.33 3 2.99 3 .22 0 .44-.03.65-.08l1.66 1.66c-.71.33-1.5.52-2.31.52-2.76 0-5.3-2.1-5.3-5.1H5c0 3.41 2.72 6.23 6 6.72V21h2v-3.28c.91-.13 1.77-.45 2.54-.9L19.73 21 21 19.73 4.27 3z"/></svg></div><div class="name">Dr. Khursheed Ah...</div></div>
<div class="tile" style="left:1187px;top:101px"><div style="position:absolute;left:36px;top:0;width:79px;height:127px;overflow:hidden"><svg style="position:absolute;left:-3px;top:-3px;filter:blur(0.8px)" width="85" height="133" viewBox="-3 -3 85 133">
<defs>
<pattern id="gcp" width="13" height="127" patternUnits="userSpaceOnUse"><rect width="13" height="127" fill="#ebebeb"/><rect x="1" width="5" height="127" fill="#f4f4f4"/><rect x="8" width="3" height="127" fill="#dedede"/></pattern>
</defs>
<rect x="-3" y="-3" width="85" height="133" fill="url(#gcp)"/>
<path d="M-3 54.7H54Q58 54.7 58 58V86H-3Z" fill="#3a3a3e"/>
<path d="M-3 74C5 72 9 68 10 58C11 44 16 38 26 38C36 38 41 46 41 58C41 68 42 74 48 80C56 84 66 92 73 100C77 104 82 108 82 112V130H-3Z" fill="#6a3f78"/>
<ellipse cx="24" cy="57.5" rx="12" ry="15.3" fill="#dcc2b2"/>
<path d="M12.8 52.3h9.5v5.5h-9.5zM25.7 52.3h9.5v5.5h-9.5z" fill="none" stroke="#2a2226" stroke-width="0.9"/>
<path d="M22.5 54h3" stroke="#2a2226" stroke-width="1"/>
<path d="M20 66q4 -1 8 0" stroke="#a87070" stroke-width="1.2" fill="none"/>
<path d="M-3 86C6 82 16 81 28 84C36 87 40 92 38 98C30 101 14 101 -3 100Z" fill="#dcc2b4"/>
<path d="M6 90q8 -3 16 2M14 95q8 -2 14 1" stroke="#b89080" stroke-width="0.9" fill="none"/>
<rect x="33" y="89.5" width="7" height="2" fill="#4a80d0"/>
<path d="M-3 100C14 102 30 101 40 98C50 102 60 106 70 112L82 118V130H-3Z" fill="#6a3a78"/>
<path d="M62 100C70 104 76 110 79 114V127H68Z" fill="#a0608e" opacity="0.7"/>
<path d="M-3 114C20 109 55 109 82 116V130H-3Z" fill="#f1eff2"/>
</svg></div><div class="mute"><svg style="position:absolute;left:3px;top:3px" width="18" height="18" viewBox="0 0 24 24"><path fill="#fff" d="M19 11h-1.7c0 .74-.16 1.43-.43 2.05l1.23 1.23c.56-.98.9-2.09.9-3.28zm-4.02.17c0-.06.02-.11.02-.17V5c0-1.66-1.34-3-3-3S9 3.34 9 5v.18l5.98 5.99zM4.27 3L3 4.27l6.01 6.01V11c0 1.66 1.33 3 2.99 3 .22 0 .44-.03.65-.08l1.66 1.66c-.71.33-1.5.52-2.31.52-2.76 0-5.3-2.1-5.3-5.1H5c0 3.41 2.72 6.23 6 6.72V21h2v-3.28c.91-.13 1.77-.45 2.54-.9L19.73 21 21 19.73 4.27 3z"/></svg></div><div class="name">Gul Andama</div></div>
<div class="tile" style="left:859px;top:240px"><div class="av"><svg style="position:absolute;left:0;top:0;filter:blur(0.8px)" width="46" height="46" viewBox="0 0 46 46">
<defs><linearGradient id="sjbg" x1="0" y1="0" x2="1" y2="0.3"><stop offset="0" stop-color="#9a90a4"/><stop offset="0.12" stop-color="#b4a898"/><stop offset="0.55" stop-color="#c2b6a4"/><stop offset="1" stop-color="#d6cab4"/></linearGradient></defs>
<rect width="46" height="46" fill="url(#sjbg)"/>
<rect x="0" y="14" width="3" height="20" fill="#8a80c0" opacity="0.7"/>
<path d="M6 10L14 9L13 28L7 30Z" fill="#a89a8a" opacity="0.6"/><path d="M4 8h2v30h-2zM9 10h1.5v24h-1.5z" fill="#6e665e" opacity="0.6"/>
<path d="M5 46C5 34 8 27 17 24.5L23 26L29 24.5C38 27 42 34 42 46Z" fill="#4a5a86"/>
<path d="M18.5 24.5L23 33L27.5 24.5L25 23H21Z" fill="#d8dce8"/>
<path d="M22 27.5H24.5L26 45H21.3Z" fill="#c83c2c"/>
<path d="M16 24.5L21 36L18 26Z" fill="#33466e"/><path d="M30 24.5L25 36L28 26Z" fill="#33466e"/>
<rect x="30" y="40" width="4" height="3" fill="#e8e8e8"/>
<ellipse cx="24.2" cy="14" rx="6.8" ry="9.6" fill="#c49684"/>
<path d="M17.2 12C17 5 20 3 24 3C29 3 31.5 6 31.2 12C30 8 28 7 24 7C20 7 18 9 17.2 12Z" fill="#3c2c24"/>
<path d="M20.5 19q3.5 2 7 0" stroke="#8a5a4a" stroke-width="0.8" fill="none"/>
</svg></div><div class="mute"><svg style="position:absolute;left:3px;top:3px" width="18" height="18" viewBox="0 0 24 24"><path fill="#fff" d="M19 11h-1.7c0 .74-.16 1.43-.43 2.05l1.23 1.23c.56-.98.9-2.09.9-3.28zm-4.02.17c0-.06.02-.11.02-.17V5c0-1.66-1.34-3-3-3S9 3.34 9 5v.18l5.98 5.99zM4.27 3L3 4.27l6.01 6.01V11c0 1.66 1.33 3 2.99 3 .22 0 .44-.03.65-.08l1.66 1.66c-.71.33-1.5.52-2.31.52-2.76 0-5.3-2.1-5.3-5.1H5c0 3.41 2.72 6.23 6 6.72V21h2v-3.28c.91-.13 1.77-.45 2.54-.9L19.73 21 21 19.73 4.27 3z"/></svg></div><div class="name">Sajjad Sering</div></div>
<div class="tile" style="left:1023px;top:240px"><div class="av"><svg style="position:absolute;left:0;top:0;filter:blur(0.8px)" width="46" height="46" viewBox="0 0 46 46">
<rect width="46" height="46" fill="#58607a"/>
<rect x="21" y="0" width="25" height="16" fill="#a6cad8"/>
<path d="M21 16L28 9L32 13L36 10L42 15V24H21Z" fill="#6f9094"/>
<path d="M21 18L30 16L38 20V34H21Z" fill="#8a8070"/>
<path d="M0 0H14L22 2V30H0Z" fill="#3e3c6e"/>
<path d="M13 1L21.5 0L22 26L14 24Z" fill="#4e6a70"/>
<path d="M38 10L46 9V46H36Z" fill="#5e5878"/>
<path d="M0 13.4L37 24.3V28.3L0 33.2Z" fill="#c04848"/>
<path d="M0 16.6L37 25V28L0 30Z" fill="#c89050"/>
<path d="M0 20L37 25.8V27.6L0 27Z" fill="#a8a858"/>
<path d="M0 23.3L37 26.4V27.6L0 30Z" fill="#52a058"/>
<path d="M0 27L37 27.2V28L0 33.2Z" fill="#3a70b0"/>
<path d="M0 30.5L37 27.8V28.3L0 36Z" fill="#6a3a90"/>
<path d="M8 46C10 38 20 33 32 34C38 34 42 36 44 40V46Z" fill="#2c4a6c"/>
<path d="M0 36L10 34L8 46H0Z" fill="#4a4a7a"/>
</svg></div><div class="mute"><svg style="position:absolute;left:3px;top:3px" width="18" height="18" viewBox="0 0 24 24"><path fill="#fff" d="M19 11h-1.7c0 .74-.16 1.43-.43 2.05l1.23 1.23c.56-.98.9-2.09.9-3.28zm-4.02.17c0-.06.02-.11.02-.17V5c0-1.66-1.34-3-3-3S9 3.34 9 5v.18l5.98 5.99zM4.27 3L3 4.27l6.01 6.01V11c0 1.66 1.33 3 2.99 3 .22 0 .44-.03.65-.08l1.66 1.66c-.71.33-1.5.52-2.31.52-2.76 0-5.3-2.1-5.3-5.1H5c0 3.41 2.72 6.23 6 6.72V21h2v-3.28c.91-.13 1.77-.45 2.54-.9L19.73 21 21 19.73 4.27 3z"/></svg></div><div class="name">shazia bakhsh</div></div>
<div class="tile" style="left:1187px;top:240px"><div class="av"><svg style="position:absolute;left:0;top:0;filter:blur(0.8px)" width="46" height="46" viewBox="0 0 46 46">
<defs><linearGradient id="sybg" x1="0" y1="0" x2="0" y2="1"><stop offset="0" stop-color="#ddd0ac"/><stop offset="0.45" stop-color="#dcd0a6"/><stop offset="0.65" stop-color="#c9c196"/><stop offset="1" stop-color="#c8c4b0"/></linearGradient></defs>
<rect width="46" height="46" fill="url(#sybg)"/>
<path d="M0 22L20 20V30L0 32Z" fill="#c8c090" opacity="0.8"/>
<path d="M0 32C8 31 16 32 20 34V46H0Z" fill="#d4d6d2"/>
<path d="M18 46L17 36C16 27 18 20 23 18L26 17.5L30 18C36 20 40 26 41 34L40 46Z" fill="#1d2b42"/><path d="M38 26C41 30 43 36 43 42L40 43L38 34Z" fill="#1a2840"/>
<path d="M19 21C15 26 12 34 11 40L14.5 41L18 30Z" fill="#1d2b42"/>
<path d="M10.5 38.5L14 39L14 43.5L11 43Z" fill="#c09a78"/>
<ellipse cx="26" cy="10.5" rx="4.7" ry="6" fill="#b08866"/>
<path d="M21.2 9C21 5 23 4 26 4C29 4 31 5 30.8 9C30 6.5 28.5 6 26 6C23.5 6 22 6.5 21.2 9Z" fill="#2a2018"/>
<path d="M21.5 12C22 16 24 17 26 17C28 17 30 16 30.5 12C29 14 27.5 13.5 26 13.5C24.5 13.5 23 14 21.5 12Z" fill="#3a2a20"/>
</svg></div><div class="mute"><svg style="position:absolute;left:3px;top:3px" width="18" height="18" viewBox="0 0 24 24"><path fill="#fff" d="M19 11h-1.7c0 .74-.16 1.43-.43 2.05l1.23 1.23c.56-.98.9-2.09.9-3.28zm-4.02.17c0-.06.02-.11.02-.17V5c0-1.66-1.34-3-3-3S9 3.34 9 5v.18l5.98 5.99zM4.27 3L3 4.27l6.01 6.01V11c0 1.66 1.33 3 2.99 3 .22 0 .44-.03.65-.08l1.66 1.66c-.71.33-1.5.52-2.31.52-2.76 0-5.3-2.1-5.3-5.1H5c0 3.41 2.72 6.23 6 6.72V21h2v-3.28c.91-.13 1.77-.45 2.54-.9L19.73 21 21 19.73 4.27 3z"/></svg></div><div class="name">Syed Mansoor Ah...</div></div>
<div class="tile" style="left:859px;top:379px"><div class="av" style="background:#f4511e;color:#fff;font-size:24px;line-height:46px;text-align:center">K</div><div class="mute"><svg style="position:absolute;left:3px;top:3px" width="18" height="18" viewBox="0 0 24 24"><path fill="#fff" d="M19 11h-1.7c0 .74-.16 1.43-.43 2.05l1.23 1.23c.56-.98.9-2.09.9-3.28zm-4.02.17c0-.06.02-.11.02-.17V5c0-1.66-1.34-3-3-3S9 3.34 9 5v.18l5.98 5.99zM4.27 3L3 4.27l6.01 6.01V11c0 1.66 1.33 3 2.99 3 .22 0 .44-.03.65-.08l1.66 1.66c-.71.33-1.5.52-2.31.52-2.76 0-5.3-2.1-5.3-5.1H5c0 3.41 2.72 6.23 6 6.72V21h2v-3.28c.91-.13 1.77-.45 2.54-.9L19.73 21 21 19.73 4.27 3z"/></svg></div><div class="name">Kishwar Sultana</div></div>
<div class="tile" style="left:1023px;top:379px"><div style="position:absolute;left:48.5px;top:34.5px;width:27px;height:27px;border-radius:50%;overflow:hidden;background:linear-gradient(90deg,#c8c4c8 0%,#e8e0e0 40%,#8a8080 60%)">
<div style="position:absolute;left:11px;top:5px;width:10px;height:12px;background:#8a6a5a;border-radius:5px"></div>
<div style="position:absolute;left:11px;top:4px;width:10px;height:4px;background:#2a2020;border-radius:5px 5px 0 0"></div>
<div style="position:absolute;left:9px;top:16px;width:18px;height:12px;background:#2a2624;border-radius:6px 6px 0 0"></div></div>
<div style="position:absolute;left:75.5px;top:34.5px;width:27px;height:27px;border-radius:50%;overflow:hidden;background:radial-gradient(circle at 30% 50%,#7a7040,#2a2a20 70%)">
<div style="position:absolute;left:8px;top:4px;width:11px;height:13px;background:#b08060;border-radius:5px 5px 6px 6px"></div>
<div style="position:absolute;left:8px;top:3px;width:11px;height:4px;background:#2a1c14;border-radius:5px 5px 0 0"></div>
<div style="position:absolute;left:4px;top:17px;width:20px;height:12px;background:#5a4a3a;border-radius:6px 6px 0 0"></div></div>
<div style="position:absolute;left:0;top:77px;width:152px;text-align:center;color:#e8eaed;font-size:13px;font-weight:bold;line-height:15px">10 others</div></div>
<div class="tile" style="left:1187px;top:379px"><div class="av"><svg style="position:absolute;left:0;top:0;filter:blur(0.8px)" width="46" height="46" viewBox="0 0 46 46">
<rect width="46" height="46" fill="#6e6c6c"/>
<path d="M14 8L32 6L42 46H6Z" fill="#626062"/>
<path d="M0 0H12L11 36L0 42Z" fill="#5c5856"/>
<path d="M1 12L9 9L10 30L3 34Z" fill="#80766e"/>
<path d="M2 30L9 28L9 40L3 42Z" fill="#4a4644"/>
<path d="M24 0H46V14L28 10Z" fill="#5a5256"/>
<path d="M33 5L40 4L44 18L35 19Z" fill="#a8403e"/>
<path d="M30.7 12H34.7L34 17.8H31.5Z" fill="#e06020"/>
<rect x="36" y="8" width="4" height="13" fill="#3a3a40"/>
<path d="M14.3 21V6C14.3 3.5 16.5 2.9 19 2.9C21.5 2.9 23.3 3.5 23.3 6V21Z" fill="#3a2a24"/>
<ellipse cx="18.8" cy="7.2" rx="2.3" ry="3.2" fill="#c29484"/>
<path d="M11.5 27L12 13C12.5 11.6 14 11.4 15 11.4H23C24.5 11.4 25.5 11.6 26 13L25.5 27L22.8 27.5H14Z" fill="#d6405c"/>
<path d="M14.3 12V21H23.3V12L21 11.5H16.5Z" fill="#3a2a24" opacity="0.5"/>
<rect x="10.4" y="23.8" width="3.9" height="4.5" rx="1" fill="#8a5a3a"/>
<path d="M14 27.5H22.8L21.5 44.6H18.6L18.2 33L17 44.6H14.5Z" fill="#a6c2d4"/>
</svg></div><div class="mute"><svg style="position:absolute;left:3px;top:3px" width="18" height="18" viewBox="0 0 24 24"><path fill="#fff" d="M19 11h-1.7c0 .74-.16 1.43-.43 2.05l1.23 1.23c.56-.98.9-2.09.9-3.28zm-4.02.17c0-.06.02-.11.02-.17V5c0-1.66-1.34-3-3-3S9 3.34 9 5v.18l5.98 5.99zM4.27 3L3 4.27l6.01 6.01V11c0 1.66 1.33 3 2.99 3 .22 0 .44-.03.65-.08l1.66 1.66c-.71.33-1.5.52-2.31.52-2.76 0-5.3-2.1-5.3-5.1H5c0 3.41 2.72 6.23 6 6.72V21h2v-3.28c.91-.13 1.77-.45 2.54-.9L19.73 21 21 19.73 4.27 3z"/></svg></div><div class="name">You</div></div>
<!--/TILES-->

<div class="abs" style="left:-8px;top:551px;width:20px;height:70px;background:#3c4043;border-radius:10px"></div>
<svg class="abs" style="left:3px;top:576px" width="8" height="9" viewBox="0 0 8 9"><path d="M1 0.5L7 4.5L1 8.5Z" fill="#fff"/></svg>
<div class="abs" style="left:13px;top:571px;color:#fff;font-size:15px;font-weight:bold;line-height:18px;letter-spacing:-0.3px;white-space:nowrap">3:22 PM</div>
<div class="abs" style="left:79px;top:573px;width:1px;height:15px;background:#e8eaed"></div>
<div class="abs" style="left:93px;top:571px;color:#fff;font-size:15px;font-weight:bold;line-height:18px;letter-spacing:-0.1px;white-space:nowrap">UPGP1-Google meet permanent link for the On...</div>

<div class="btn red" style="left:494px"><svg class="abs" style="left:10px;top:9px" width="18" height="18" viewBox="0 0 24 24"><path fill="#fff" d="M19 11h-1.7c0 .74-.16 1.43-.43 2.05l1.23 1.230c.56-.98.9-2.09.9-3.28zm-4.02.17c0-.06.02-.11.02-.17V5c0-1.66-1.34-3-3-3S9 3.340 9 5v.18l5.98 5.99zM4.27 3L3 4.27l6.01 6.01V11c0 1.66 1.33 3 2.99 3 .22 0 .44-.03.65-.08l1.66 1.66c-.71.33-1.5.52-2.31.52-2.76 0-5.3-2.1-5.3-5.1H5c0 3.41 2.72 6.23 6 6.72V21h2v-3.28c.91-.13 1.77-.45 2.54-.9L19.73 21 21 19.730 4.27 3z"/></svg></div>
<div class="btn red" style="left:544px"><svg class="abs" style="left:9px;top:9px" width="20" height="20" viewBox="0 0 20 20"><rect x="2.2" y="4.2" width="11" height="10.6" rx="1" fill="none" stroke="#fff" stroke-width="1.7"/><path d="M13 8.5L17.2 5.3V14.7L13 11.5Z" fill="#fff"/><path d="M1.5 1.5L16 17.5" stroke="#ea4335" stroke-width="3"/><path d="M1.5 1.5L16 17.5" stroke="#fff" stroke-width="1.6"/></svg></div>
<div class="btn" style="left:593px"><svg class="abs" style="left:9px;top:10px" width="20" height="18" viewBox="0 0 20 18"><rect x="1.7" y="1.7" width="16.3" height="14" rx="0.8" fill="none" stroke="#fff" stroke-width="2"/><path d="M9 7.2H5.3V10.8H9M15 7.2H11.3V10.8H15" fill="none" stroke="#fff" stroke-width="2"/></svg></div>
<div class="btn" style="left:643px"><svg class="abs" style="left:9px;top:7px" width="20" height="25" viewBox="0 0 20 25"><path d="M6 13.5V4.3a1.6 1.6 0 0 1 3.2 0V11M9.2 11V2.8a1.6 1.6 0 0 1 3.2 0V11M12.4 11V3.8a1.6 1.6 0 0 1 3.2 0V11M15.6 11V6.3a1.6 1.6 0 0 1 3.2 0V15a7.5 7.5 0 0 1-13 5L1.3 11.3a1.3 1.3 0 0 1 2-1.4L6 13.5" fill="none" stroke="#fff" stroke-width="1.9" stroke-linejoin="round"/></svg></div>
<div class="btn" style="left:692px"><svg class="abs" style="left:7px;top:9px" width="24" height="20" viewBox="0 0 24 20"><rect x="1.5" y="1.3" width="21" height="16.6" fill="none" stroke="#fff" stroke-width="2.4"/><path d="M12 5.5L16.5 9.8H13.7V13.5H10.3V9.8H7.5Z" fill="#fff"/></svg></div>
<div class="btn" style="left:742px"><svg class="abs" style="left:16px;top:9px" width="6" height="20" viewBox="0 0 6 20"><circle cx="3" cy="3" r="2.3" fill="#fff"/><circle cx="3" cy="10" r="2.3" fill="#fff"/><circle cx="3" cy="17" r="2.3" fill="#fff"/></svg></div>
<div class="btn red" style="left:791px;width:53px;border-radius:19px"><svg class="abs" style="left:13px;top:13px" width="27" height="12" viewBox="0 0 27 12"><path d="M1 6.5C8 -0.5 19 -0.5 26 6.5L22.5 10.5L17.5 7.5V3.5C15 2.5 12 2.5 9.5 3.5V7.5L4.5 10.5Z" fill="#fff"/></svg></div>

<svg class="abs" style="left:1062px;top:570px" width="22" height="22" viewBox="0 0 22 22"><circle cx="11" cy="10.5" r="9" fill="none" stroke="#fff" stroke-width="2.2"/><rect x="9.8" y="6.3" width="2.4" height="2" fill="#fff"/><rect x="9.8" y="9.7" width="2.4" height="6" fill="#fff"/></svg>
<svg class="abs" style="left:1109px;top:572px" width="24" height="18" viewBox="0 0 24 18"><circle cx="8.5" cy="4.5" r="3.3" fill="none" stroke="#fff" stroke-width="2.2"/><path d="M14 1.3A5.4 3.8 0 0 1 14 8.9A6 6 0 0 0 14 1.3Z" fill="#fff"/><path d="M2 16.2V14.5C2 12 5 10.6 8.5 10.6S15 12 15 14.5V16.2Z" fill="none" stroke="#fff" stroke-width="2.2"/><path d="M17.5 10.8C20.5 11.5 22.5 12.8 22.5 14.8V17.2H17.5Z" fill="#fff"/></svg>
<div class="abs" style="left:1122px;top:552px;width:19px;height:19px;border-radius:50%;background:#5f6368;color:#fff;font-size:11px;font-weight:bold;line-height:19px;text-align:center;letter-spacing:-0.5px">19</div>
<svg class="abs" style="left:1158px;top:569px" width="23" height="23" viewBox="0 0 23 23"><path d="M2.2 21V3.2H20.2V15.5H6L2.2 20" fill="none" stroke="#fff" stroke-width="2.2" stroke-linejoin="round"/><rect x="5.2" y="6" width="12" height="1.8" fill="#fff"/><rect x="5.2" y="8.9" width="12" height="1.8" fill="#fff"/><rect x="5.2" y="11.8" width="9" height="1.8" fill="#fff"/></svg>
<div class="abs" style="left:1173.7px;top:567px;width:3.5px;height:3.5px;border-radius:50%;background:#8ab4f8"></div>
<svg class="abs" style="left:1207px;top:570px" width="22" height="22" viewBox="0 0 22 22"><path d="M10.3 3.5L13.8 9H6.8Z" fill="none" stroke="#fff" stroke-width="2" stroke-linejoin="round"/><rect x="2.2" y="13" width="6.8" height="6.8" fill="none" stroke="#fff" stroke-width="2.2"/><circle cx="15.5" cy="16.4" r="3.4" fill="none" stroke="#fff" stroke-width="2.2"/></svg>
<svg class="abs" style="left:1256px;top:569px" width="22" height="24" viewBox="0 0 22 24"><path d="M4.5 8.5V6a5 5 0 0 1 10 0V8.5" fill="none" stroke="#fff" stroke-width="2"/><path d="M11 21.5H2V8.5H16V13" fill="none" stroke="#fff" stroke-width="2" stroke-linejoin="round"/><circle cx="15.4" cy="18.3" r="4.7" fill="#fff"/><circle cx="15.4" cy="16.8" r="1.3" fill="#202124"/><path d="M12.9 20.3a2.6 2 0 0 1 5 0Z" fill="#202124"/></svg>
<svg class="abs" style="left:1305px;top:568px" width="18" height="27" viewBox="0 0 18 27"><ellipse cx="9" cy="22.3" rx="4.6" ry="2.8" fill="#e6e6e6"/><ellipse cx="9" cy="21.7" rx="3.5" ry="1.7" fill="#d81b60"/><path d="M2.5 1.5H10.5C12.3 1.5 13.3 4 13.6 6.5L14 14.3L12.3 14.6L10.7 13.3L9.6 21H8.5L8.5 14.2C4.2 14.6 1.6 12 1.6 8.5Z" fill="#fbbc04"/><path d="M9 14L10.7 13.3" stroke="#e0a000" stroke-width="0.6"/></svg>
</div>
</body></html>
